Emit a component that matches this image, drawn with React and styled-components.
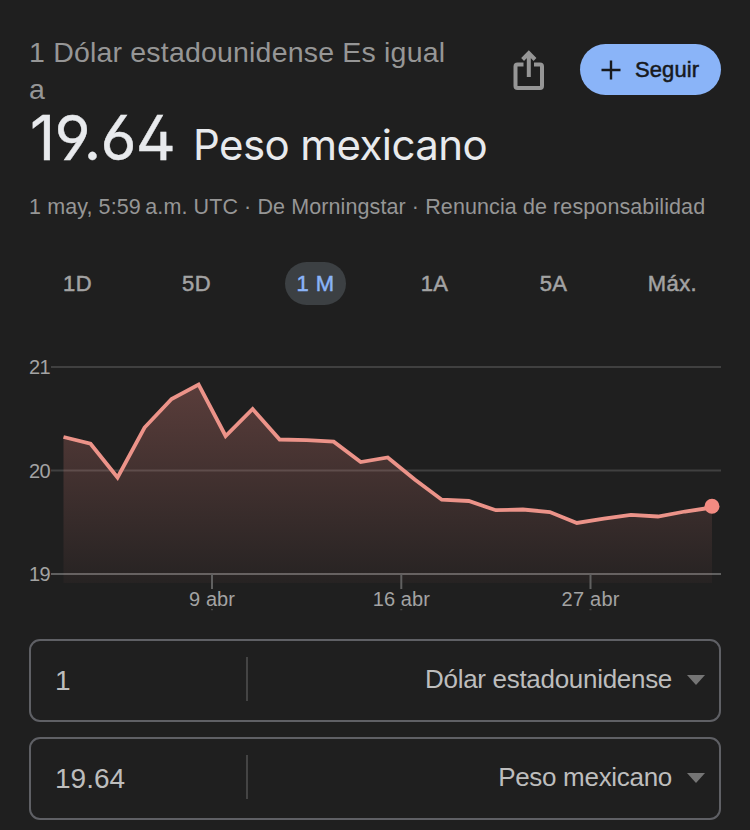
import React, { useState } from 'react';
import styled, { createGlobalStyle } from 'styled-components';

const GlobalStyle = createGlobalStyle`
  * {
    box-sizing: border-box;
    margin: 0;
    padding: 0;
  }
  body {
    background-color: #1f1f1f;
    font-family: 'Liberation Sans', Arial, sans-serif;
  }
  button {
    border: none;
    background: none;
    font-family: inherit;
    cursor: pointer;
  }
`;

const Page = styled.main`
  width: 750px;
  height: 830px;
  padding: 34px 29px 0;
  overflow: hidden;
  background-color: #1f1f1f;
`;

const Header = styled.header`
  display: flex;
  align-items: flex-start;
  height: 72px;
`;

const Title = styled.h2`
  width: 440px;
  font-size: 28.5px;
  font-weight: 400;
  line-height: 37px;
  letter-spacing: 0.19px;
  color: #969696;
`;

const Actions = styled.div`
  display: flex;
  align-items: center;
  margin: 10px 0 0 auto;
  gap: 35px;
`;

const ShareBtn = styled.button`
  width: 32px;
  height: 42px;
  svg {
    display: block;
  }
`;

const FollowBtn = styled.button`
  display: flex;
  align-items: center;
  width: 141px;
  height: 51px;
  padding-left: 21px;
  gap: 14px;
  border-radius: 26px;
  background-color: #8ab4f8;
  color: #17191d;
  font-size: 22px;
  letter-spacing: 0.1px;
  -webkit-text-stroke: 0.5px #17191d;
`;

const Rate = styled.p`
  display: flex;
  align-items: baseline;
  height: 75px;
  padding-left: 1px;
  line-height: 64px;
  font-family: Inter, sans-serif;
  font-feature-settings: 'cv03', 'cv04', 'ss01';
  color: #e8eaed;
`;

const Amount = styled.span`
  font-size: 62px;
  letter-spacing: -0.8px;
  -webkit-text-stroke: 0.4px #e8eaed;
`;

const Currency = styled.span`
  margin-left: 18px;
  font-size: 42px;
  letter-spacing: -0.6px;
`;

const Source = styled.p`
  height: 52px;
  line-height: 52px;
  font-size: 21.5px;
  letter-spacing: 0.1px;
  white-space: nowrap;
  color: #969696;
`;

const Tabs = styled.nav`
  display: grid;
  grid-template-columns: repeat(6, 119px);
  justify-content: center;
  margin: 29px -12px 0;
`;

const Tab = styled.button`
  justify-self: center;
  height: 43px;
  padding: 0 12px;
  border-radius: 22px;
  background-color: ${({ $active }) => ($active ? '#3c4043' : 'transparent')};
  color: ${({ $active }) => ($active ? '#8ab4f8' : '#a3a3a3')};
  font-size: 22px;
  letter-spacing: 0.4px;
  -webkit-text-stroke: 0.5px currentColor;
`;

const Chart = styled.svg`
  display: block;
  margin-top: 35px;
  font-size: 20px;
`;

const Converter = styled.section`
  display: grid;
  gap: 15px;
  margin-top: 19px;
`;

const Field = styled.div`
  display: flex;
  align-items: center;
  height: 83px;
  padding: 0 14px 2px 24px;
  border: 2px solid #5f6065;
  border-radius: 11px;
  color: #bdbdbd;
`;

const Value = styled.span`
  width: 191px;
  padding-top: 3px;
  font-size: 28px;
`;

const Divider = styled.span`
  width: 2px;
  height: 44px;
  margin-bottom: 2px;
  background-color: #444;
`;

const Unit = styled.span`
  margin-left: auto;
  font-size: 26px;
  letter-spacing: -0.3px;
`;

const Caret = styled.svg`
  margin-left: 15px;
`;

const RANGES = ['1D', '5D', '1 M', '1A', '5A', 'Máx.'];

const LEVELS = [
  { label: '21', y: 27 },
  { label: '20', y: 130.5 },
  { label: '19', y: 234 },
];

const DATES = [
  { label: '9 abr', x: 183, width: 46 },
  { label: '16 abr', x: 372.3, width: 57 },
  { label: '27 abr', x: 561.5, width: 58 },
];

// y of each day, from left to right
const RATES = [
  97, 103.7, 137.5, 87.5, 59, 44.5, 96, 69, 99.5, 100.2, 101.7, 122, 117.5,
  139.5, 159.7, 161, 170.2, 169.5, 172, 183, 178.7, 174.8, 176.5, 171.5, 167.5,
];

const STEP = 27.02;
const START = 34.5;

const RateChart = () => {
  const line = RATES.map((y, i) => `${START + i * STEP},${y}`).join(' ');
  const end = START + (RATES.length - 1) * STEP;
  return (
    <Chart width="692" height="280" viewBox="0 0 692 280">
      <defs>
        <linearGradient
          id="fill"
          gradientUnits="userSpaceOnUse"
          x1="0"
          y1="44"
          x2="0"
          y2="243"
        >
          <stop offset="0" stopColor="#f28b82" stopOpacity="0.28" />
          <stop offset="1" stopColor="#f28b82" stopOpacity="0.035" />
        </linearGradient>
      </defs>
      {LEVELS.map(({ label, y }) => (
        <g key={label}>
          <line
            x1="22"
            x2="692"
            y1={y}
            y2={y}
            stroke={label === '19' ? '#606060' : '#404040'}
            strokeWidth="2"
          />
          <text x="0" y={y + 7} fill="#a3a3a3" textLength="21.5">
            {label}
          </text>
        </g>
      ))}
      <polygon points={`${START},243 ${line} ${end},243`} fill="url(#fill)" />
      {DATES.map(({ label, x, width }) => (
        <g key={label}>
          <line x1={x} x2={x} y1="234" y2="249" stroke="#606060" strokeWidth="2" />
          <line x1={x - 1} x2={x + 1} y1="269.7" y2="269.7" stroke="#555" />
          <text
            x={x}
            y="266"
            fill="#a3a3a3"
            textAnchor="middle"
            textLength={width}
          >
            {label}
          </text>
        </g>
      ))}
      <polyline points={line} fill="none" stroke="#ec9389" strokeWidth="3.8" />
      <circle cx={end} cy="166.2" r="7.5" fill="#f28b82" />
    </Chart>
  );
};

const ConverterField = ({ value, unit }) => (
  <Field>
    <Value>{value}</Value>
    <Divider />
    <Unit>{unit}</Unit>
    <Caret width="18" height="10" viewBox="0 0 18 10">
      <path d="M0 0H18L9 10Z" fill="#757575" />
    </Caret>
  </Field>
);

const App = () => {
  const [range, setRange] = useState('1 M');

  return (
    <>
      <GlobalStyle />
      <Page>
        <Header>
          <Title>1 Dólar estadounidense Es igual a</Title>
          <Actions>
            <ShareBtn aria-label="Compartir">
              <svg width="32" height="42" viewBox="0 0 32 42" fill="none">
                <path
                  d="M10.5 15.5H4.5Q2.5 15.5 2.5 17.5V37Q2.5 39 4.5 39H27Q29 39 29 37V17.5Q29 15.5 27 15.5H21"
                  stroke="#969696"
                  strokeWidth="4"
                />
                <path
                  d="M15.8 28V5M9.6 10.5L15.8 4.2L22 10.5"
                  stroke="#969696"
                  strokeWidth="4"
                />
              </svg>
            </ShareBtn>
            <FollowBtn>
              <svg width="20" height="20" viewBox="0 0 20 20">
                <path d="M10 0.5V19.5M0.5 10H19.5" stroke="#17191d" strokeWidth="2.4" />
              </svg>
              Seguir
            </FollowBtn>
          </Actions>
        </Header>
        <Rate>
          <Amount>19.64</Amount>
          <Currency>Peso mexicano</Currency>
        </Rate>
        <Source>
          1 may, 5:59&#8201;a.m. UTC · De Morningstar · Renuncia de responsabilidad
        </Source>
        <Tabs>
          {RANGES.map((name) => (
            <Tab
              key={name}
              $active={name === range}
              onClick={() => setRange(name)}
            >
              {name}
            </Tab>
          ))}
        </Tabs>
        <RateChart />
        <Converter>
          <ConverterField value="1" unit="Dólar estadounidense" />
          <ConverterField value="19.64" unit="Peso mexicano" />
        </Converter>
      </Page>
    </>
  );
};

export default App;
